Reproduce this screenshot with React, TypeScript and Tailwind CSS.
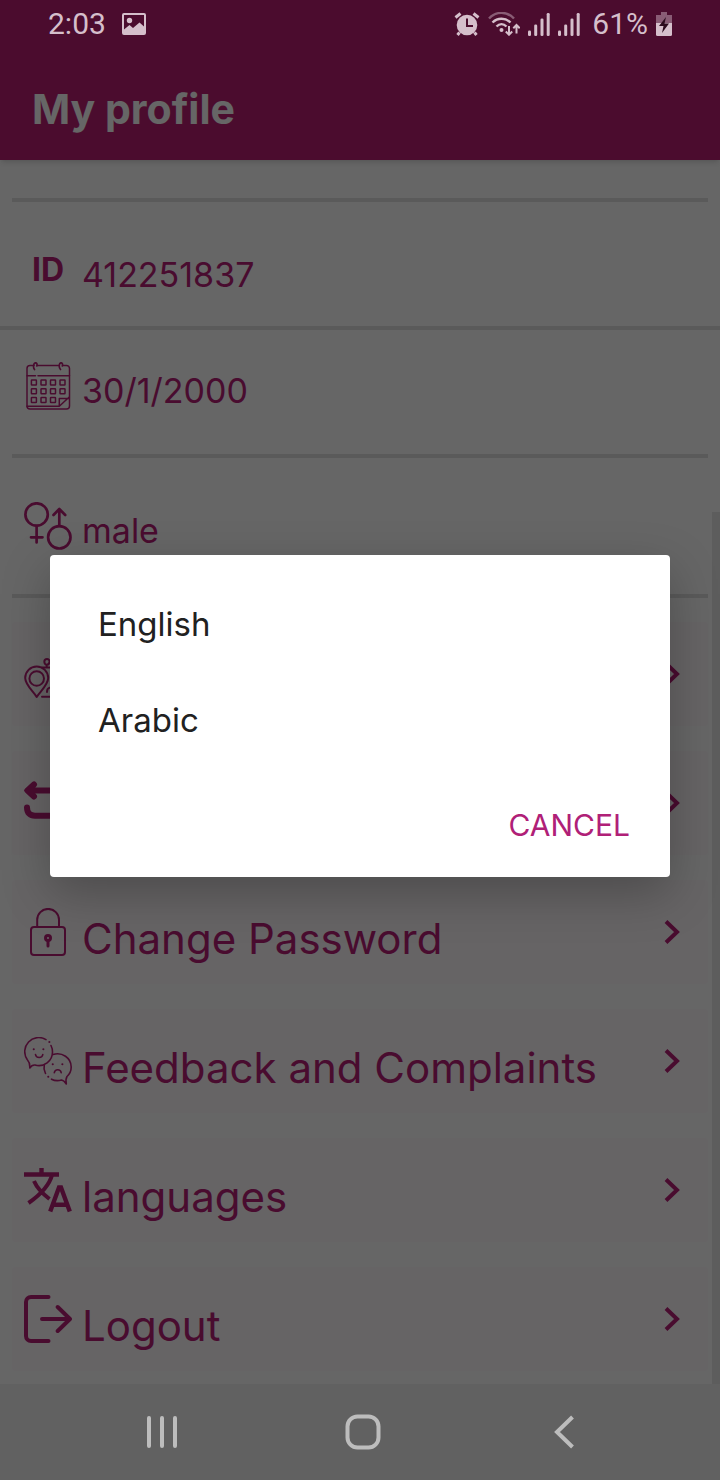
import React from "react";

type IconProps = { children: React.ReactNode; width?: number };

function RowIcon({ children, width = 2 }: IconProps) {
  return (
    <svg
      className="size-12 shrink-0"
      viewBox="0 0 48 48"
      fill="none"
      stroke="currentColor"
      strokeWidth={width}
      strokeLinecap="round"
      strokeLinejoin="round"
      aria-hidden="true"
    >
      {children}
    </svg>
  );
}

function CalendarIcon() {
  const columns = [7.4, 17, 26.5, 36];
  const rows = [18, 26.8, 35.6];
  return (
    <RowIcon width={1.5}>
      <path d="M10 3.5H6A3 3 0 0 0 3 6.500V44A3 3 0 0 0 6 47H42.500A3 3 0 0 0 45.500 44V6.500A3 3 0 0 0 42.500 3.500H39M13.500 3.500H35" />
      <path d="M10.500 7.500C8.800 5.500 9.500 .8 11.500 .8C13 .8 13.300 2.500 12.800 4M36.500 7.500C34.500 5.500 35 .8 37 .8C38.500 .8 38.800 2.500 38.300 4" strokeWidth={1.7} />
      <path d="M3 13.700H11.500M14 13.700H45.500M3 44.300H35.300L45 35.300M35.300 44.300V36.500H45" />
      {rows.map((y, r) =>
        columns.map((x, c) =>
          r === 2 && c === 3 ? null : <rect key={`${r}-${c}`} x={x} y={y} width="5" height="5" rx=".5" />,
        ),
      )}
    </RowIcon>
  );
}

function GenderIcon() {
  return (
    <RowIcon width={2.7}>
      <circle cx="12.600" cy="12.500" r="11.200" />
      <path d="M12.600 24V40.500M7 35.300H18.500" />
      <circle cx="35.300" cy="35.300" r="11.200" />
      <path d="M35.300 24V7M29.500 13L35.300 7L41.200 13" />
    </RowIcon>
  );
}

function AddressIcon() {
  return (
    <RowIcon>
      <path d="M12.700 47C10 42 1.200 35 1.200 28A11.500 11.500 0 0 1 24.200 28C24.200 35 15.500 42 12.700 47Z" />
      <circle cx="12.700" cy="28.500" r="7.300" />
      <path d="M22.700 17V15C19.500 14 19.500 9 23 9C26.500 9 26.500 14 22.700 15M18 17.500H42V46.700H18M23 42C23 37 28 36 30 40" />
    </RowIcon>
  );
}

function ReturnIcon() {
  return (
    <RowIcon width={6}>
      <path d="M10 5.500L3.500 11.500L10 17.500M4 11.500H38A7 7 0 0 1 45 18.500M3 28.500C3 34 6 36.700 11 36.700H45" />
      <path d="M0 11.500L9 3V20Z" fill="currentColor" stroke="none" />
    </RowIcon>
  );
}

function LockIcon() {
  return (
    <RowIcon>
      <rect x="7" y="19" width="34" height="28" rx="3" />
      <path d="M13.200 19V11.800A10.900 10.900 0 0 1 35 11.800V19" />
      <circle cx="24" cy="30" r="2.500" strokeWidth="3" />
      <path d="M24 33V38" strokeWidth="3" />
    </RowIcon>
  );
}

function FeedbackIcon() {
  return (
    <RowIcon width={1.6}>
      <path d="M22 2.600A14 14 0 0 0 3.200 22.500C5.500 25 6 28 5.800 31C7 29 8.500 27.800 11 28C20 30.500 28.500 24 28.500 15C28.500 12.500 28 10.500 27 8.500" />
      <path d="M29 17.500C38 14.500 47.200 21 47.200 30C47.200 34 45.500 37.200 43 39.500C41.800 41.500 41.800 44.500 42.300 47C41 45 39.500 43.200 37.500 43C34 44 30 43.500 27.500 42.200M21.500 36.500C20 33.500 19.500 31 20.300 27.500" />
      <path d="M25.300 5H25.400M24.200 39.700H24.300M9.700 12.300H9.800M19.300 12.300H19.400M28.700 27.300H28.800M38.300 27.300H38.400" strokeWidth="2" />
      <path d="M11.500 17.500C12 21.500 18.300 21.500 18.800 17.500M30.300 35.700C31 31.700 36.500 31.700 37.200 35.700" />
    </RowIcon>
  );
}

function TranslateIcon() {
  return (
    <RowIcon width={4}>
      <g strokeLinecap="butt" strokeLinejoin="miter">
        <path d="M0 8.500H35M17.500 2V8" strokeWidth="4.400" />
        <path d="M28.200 8.500C25.500 19 16 29 4.500 37M10 15C13 22 19 28 25.500 33" />
        <path d="M26.200 45.500L35 21.500H37L45.800 45.500M29.500 38.800H42.500" strokeWidth="4.400" />
      </g>
    </RowIcon>
  );
}

function LogoutIcon() {
  return (
    <RowIcon width={4}>
      <path d="M24.500 2H7A5 5 0 0 0 2 7V41A5 5 0 0 0 7 46H24.500M18 24H45.500M33.700 12L46 24L33.700 36" />
    </RowIcon>
  );
}

function Chevron() {
  return (
    <svg className="h-6 w-4 shrink-0" viewBox="0 0 16 24" fill="none" stroke="currentColor" strokeWidth="4" aria-hidden="true">
      <path d="M2 1.500L13 12L2 22.500" />
    </svg>
  );
}

function SignalIcon() {
  return (
    <svg className="h-6 w-[22px]" viewBox="0 0 22 24" fill="currentColor" aria-hidden="true">
      <rect x="0" y="18.500" width="3" height="5.500" rx="1.300" />
      <rect x="6.200" y="12.500" width="3" height="11.500" rx="1.300" />
      <rect x="12.500" y="6.500" width="3" height="17.500" rx="1.300" />
      <rect x="18.700" y="1" width="3" height="23" rx="1.300" />
    </svg>
  );
}

function StatusBar() {
  return (
    <div className="absolute inset-x-0 top-0 z-20 flex h-12 items-center justify-between px-12 font-[Roboto,sans-serif] text-[30px] leading-9 text-[#d5bfcb]">
      <div className="flex items-center gap-4">
        <span>2:03</span>
        <svg className="h-[22px] w-6" viewBox="0 0 24 22" aria-hidden="true">
          <path
            fill="currentColor"
            fillRule="evenodd"
            d="M2 0H22A2 2 0 0 1 24 2V20A2 2 0 0 1 22 22H2A2 2 0 0 1 0 20V2A2 2 0 0 1 2 0ZM2 2V16.500L7.500 12L11 15L17.500 9.500L22 13.500V2Z"
          />
          <circle cx="7.500" cy="7.500" r="2.700" fill="currentColor" />
        </svg>
      </div>
      <div className="flex items-center gap-2">
        <svg className="h-6 w-[26px]" viewBox="0 0 26 24" aria-hidden="true">
          <circle cx="13" cy="13" r="10.300" fill="currentColor" />
          <path d="M1.500 5.500L6.500 1.500M24.500 5.500L19.500 1.500M5.500 20.500L3.500 23M20.500 20.500L22.500 23" stroke="currentColor" strokeWidth="3" />
          <path d="M13 6.500V14H19" stroke="#4b0d2e" strokeWidth="2" fill="none" />
        </svg>
        <svg className="h-6 w-8" viewBox="0 0 32 24" fill="none" stroke="currentColor" strokeWidth="2.400" aria-hidden="true">
          <path d="M1 6.500C8 -1 19 -1 26 6.500" opacity=".45" />
          <path d="M4.500 10.500C9.500 5.500 17.500 5.500 22.500 10.500M8.500 14.500C11.500 11.500 15.500 11.500 18.500 14.500" />
          <circle cx="13.500" cy="18" r="2" fill="currentColor" stroke="none" />
          <path d="M21 14V22.500M17.800 19.500L21 22.700L24.200 19.500M28.500 21.500V13M25.300 16.200L28.500 13L31.700 16.200" strokeWidth="2" />
        </svg>
        <SignalIcon />
        <SignalIcon />
        <span className="pl-1">61%</span>
        <svg className="h-6 w-4" viewBox="0 0 16 24" aria-hidden="true">
          <path d="M5 0H11V3H16V11H0V3H5Z" fill="currentColor" opacity=".45" />
          <path d="M0 11H16V22.500A1.500 1.500 0 0 1 14.500 24H1.500A1.500 1.500 0 0 1 0 22.500Z" fill="currentColor" />
          <path d="M10 5L3 14H7.500L6 21L13 11.500H8.500Z" fill="#2b0b1d" />
        </svg>
      </div>
    </div>
  );
}

function InfoRow({ icon, text, className }: { icon: React.ReactNode; text: string; className: string }) {
  return (
    <div className={`flex items-center gap-2.5 px-6 ${className}`}>
      {icon}
      <span className="pt-2.5 text-[34px] leading-[38px]">{text}</span>
    </div>
  );
}

function MenuRow({ icon, text, label }: { icon: React.ReactNode; text?: string; label: string }) {
  return (
    <button type="button" aria-label={label} className="flex w-full items-center gap-2.5 rounded bg-[#fff9fc] py-7 pr-7 pl-3 text-left">
      {icon}
      <span className="flex-1 pt-3.5 text-[42px] leading-[34px] whitespace-nowrap">{text}</span>
      <Chevron />
    </button>
  );
}

function NavBar() {
  return (
    <nav className="relative z-20 grid h-24 grid-cols-3 place-items-center bg-[#616161] pr-[55px] pl-[61px] text-[#bdbdbd]">
      <button type="button" aria-label="Recent apps">
        <svg className="size-9" viewBox="0 0 36 36" fill="none" stroke="currentColor" strokeWidth="4" strokeLinecap="round">
          <path d="M5 4V32M18 4V32M31 4V32" />
        </svg>
      </button>
      <button type="button" aria-label="Home">
        <svg className="size-9" viewBox="0 0 36 36" fill="none" stroke="currentColor" strokeWidth="4">
          <rect x="2.500" y="2.500" width="31" height="31" rx="10" />
        </svg>
      </button>
      <button type="button" aria-label="Back">
        <svg className="size-9" viewBox="0 0 36 36" fill="none" stroke="currentColor" strokeWidth="4">
          <path d="M26.500 3L11 18L26.500 33" />
        </svg>
      </button>
    </nav>
  );
}

export default function App() {
  return (
    <div className="relative flex min-h-screen flex-col bg-white font-[Inter,sans-serif] text-[#b72077]">
      <StatusBar />
      <header className="relative bg-[#bb2074] px-8 pt-[82px] pb-6 text-white shadow-md">
        <h1 className="text-[41px] leading-[54px] font-bold">My profile</h1>
      </header>

      <main className="relative flex-1 pt-[38px] pb-3">
        <div className="mx-3 h-1 bg-[#e0e0e0]" />
        <InfoRow
          className="pt-11 pb-8"
          icon={<span className="flex size-12 items-center justify-center text-[32px] font-bold">ID</span>}
          text="412251837"
        />
        <div className="h-1 bg-[#e0e0e0]" />
        <InfoRow className="pt-8 pb-11" icon={<CalendarIcon />} text="30/1/2000" />
        <div className="mx-3 h-1 bg-[#e0e0e0]" />
        <InfoRow className="py-11" icon={<GenderIcon />} text="male" />
        <div className="mx-3 h-1 bg-[#e0e0e0]" />
        <div className="flex flex-col gap-[25px] px-3 pt-6">
          <MenuRow icon={<AddressIcon />} label="Addresses" />
          <MenuRow icon={<ReturnIcon />} label="Returns" />
          <MenuRow icon={<LockIcon />} label="Change Password" text="Change Password" />
          <MenuRow icon={<FeedbackIcon />} label="Feedback and Complaints" text="Feedback and Complaints" />
          <MenuRow icon={<TranslateIcon />} label="languages" text="languages" />
          <MenuRow icon={<LogoutIcon />} label="Logout" text="Logout" />
        </div>
        <div className="absolute top-[352px] right-0 bottom-0 w-2 bg-[#e8e8e8]" />
      </main>

      <NavBar />

      <div className="absolute inset-0 z-10 flex items-center justify-center bg-black/60 px-[50px] pt-12 pb-24">
        <div
          role="dialog"
          aria-label="languages"
          className="flex w-full flex-col rounded bg-white pt-[22px] pb-4 text-[#212121] shadow-[0_16px_48px_rgba(0,0,0,0.25)]"
        >
          <button type="button" className="h-24 px-12 text-left text-[33px]">English</button>
          <button type="button" className="h-24 px-12 text-left text-[33px]">Arabic</button>
          <button type="button" className="mt-5 mr-4 h-[72px] self-end px-6 text-[30px] text-[#b02077]">CANCEL</button>
        </div>
      </div>
    </div>
  );
}
